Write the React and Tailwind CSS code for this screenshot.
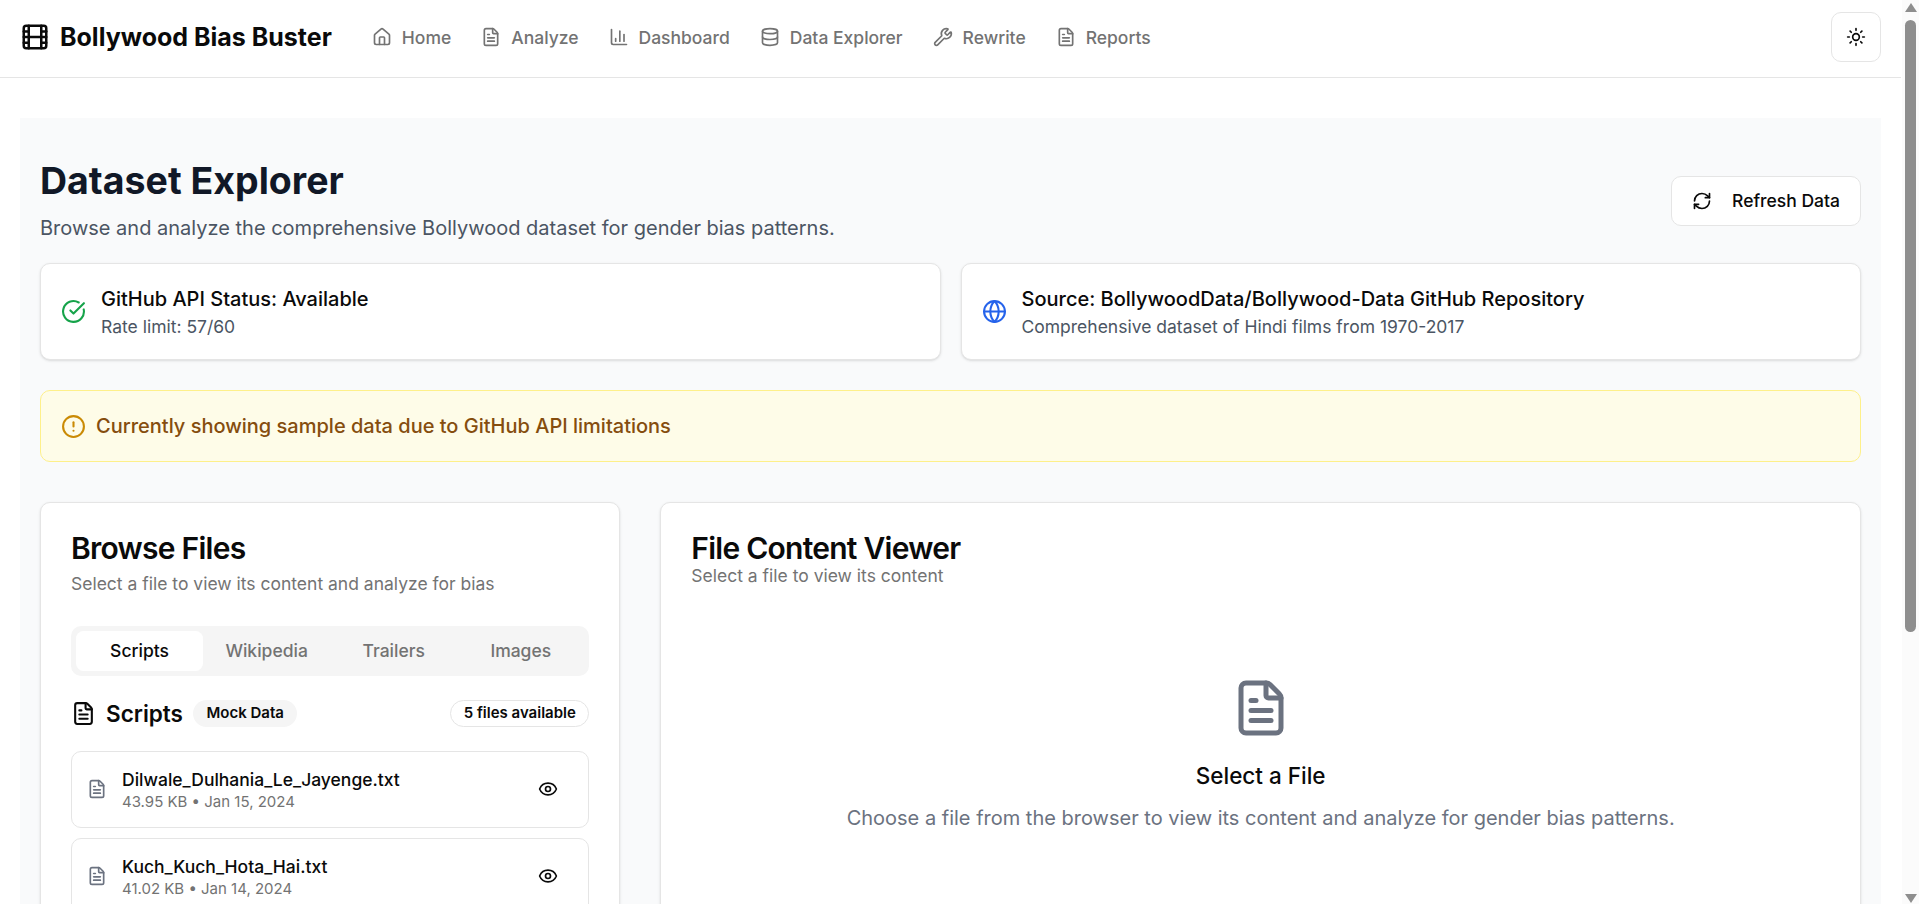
import { House, FileText, ChartColumn, Database, Wrench, Film, Sun, RefreshCw, CircleCheckBig, Globe, CircleAlert, Eye } from "lucide-react";

const nav = [
  [House, "Home"],
  [FileText, "Analyze"],
  [ChartColumn, "Dashboard"],
  [Database, "Data Explorer"],
  [Wrench, "Rewrite"],
  [FileText, "Reports"],
];

const files = [
  ["Dilwale_Dulhania_Le_Jayenge.txt", "43.95 KB • Jan 15, 2024"],
  ["Kuch_Kuch_Hota_Hai.txt", "41.02 KB • Jan 14, 2024"],
  ["Kabhi_Khushi_Kabhie_Gham.txt", "52.73 KB • Jan 13, 2024"],
  ["Dangal.txt", "38.61 KB • Jan 12, 2024"],
  ["Queen.txt", "35.18 KB • Jan 11, 2024"],
];

function InfoCard({ icon: Icon, iconClass, title, sub }) {
  return (
    <div className="flex items-center gap-[15px] rounded-[10px] border border-[#e5e5e5] bg-white p-5 shadow-sm">
      <Icon className={`w-[25px] h-[25px] shrink-0 ${iconClass}`} />
      <div>
        <div className="text-[20px] leading-[30px] font-medium text-[#0a0a0a]">{title}</div>
        <div className="text-[17.5px] leading-[25px] text-[#4b5563]">{sub}</div>
      </div>
    </div>
  );
}

export default function App() {
  return (
    <div className="min-h-screen bg-white pr-[18px] text-[#0a0a0a] font-['Inter',sans-serif]">
      <header className="flex items-center h-[78px] border-b border-[#e5e5e5] px-5 pb-[3px]">
        <div className="flex items-center gap-[10px]">
          <Film className="w-[30px] h-[30px] text-[#0a0a0a]" />
          <span className="text-[25px] leading-[35px] font-bold">Bollywood Bias Buster</span>
        </div>
        <nav className="flex items-center gap-[30px] ml-10">
          {nav.map(([Icon, label]) => (
            <a key={label} className="flex items-center gap-[10px] text-[17.5px] leading-[25px] font-medium text-[#737373]">
              <Icon className="w-5 h-5" />
              {label}
            </a>
          ))}
        </nav>
        <button className="ml-auto flex items-center justify-center w-[50px] h-[50px] rounded-[10px] border border-[#e5e5e5] bg-white">
          <Sun className="w-5 h-5 text-[#0a0a0a]" />
        </button>
      </header>

      <div className="p-5 pt-10">
        <main className="bg-[#f9fafb] p-5 pt-10 pb-10">
          <div className="flex items-center justify-between">
            <div>
              <h1 className="text-[37.5px] leading-[45px] font-bold text-[#111827]">Dataset Explorer</h1>
              <p className="mt-[10px] text-[20px] leading-[30px] text-[#4b5563]">Browse and analyze the comprehensive Bollywood dataset for gender bias patterns.</p>
            </div>
            <button className="flex items-center gap-[20px] h-[50px] px-[20px] pt-px rounded-[10px] border border-[#e5e5e5] bg-white text-[17.5px] font-medium">
              <RefreshCw className="w-5 h-5" />
              Refresh Data
            </button>
          </div>

          <div className="grid grid-cols-2 gap-5 mt-5">
            <InfoCard icon={CircleCheckBig} iconClass="text-[#16a34a]" title="GitHub API Status: Available" sub="Rate limit: 57/60" />
            <InfoCard icon={Globe} iconClass="text-[#2563eb]" title="Source: BollywoodData/Bollywood-Data GitHub Repository" sub="Comprehensive dataset of Hindi films from 1970-2017" />
          </div>

          <div className="flex items-center gap-[10px] mt-[30px] rounded-[10px] border border-[#fef08a] bg-[#fefce8] p-5">
            <CircleAlert className="w-[25px] h-[25px] text-[#ca8a04]" />
            <span className="text-[20px] leading-[30px] font-medium text-[#854d0e]">Currently showing sample data due to GitHub API limitations</span>
          </div>

          <div className="grid grid-cols-3 gap-10 mt-10 items-start">
            <section className="rounded-[10px] border border-[#e5e5e5] bg-white p-[30px] shadow-sm">
              <h2 className="text-[30px] leading-[30px] font-semibold tracking-[-0.75px]">Browse Files</h2>
              <p className="mt-[7.5px] text-[17.5px] leading-[25px] text-[#737373]">Select a file to view its content and analyze for bias</p>
              <div className="grid grid-cols-4 mt-[30px] h-[50px] p-[5px] rounded-[10px] bg-[#f5f5f5]">
                {["Scripts", "Wikipedia", "Trailers", "Images"].map((t, i) => (
                  <div key={t} className={`flex items-center justify-center pt-px rounded-[7.5px] text-[17.5px] font-medium ${i === 0 ? "bg-white text-[#0a0a0a]" : "text-[#737373]"}`}>{t}</div>
                ))}
              </div>
              <div className="flex items-center justify-between mt-5 h-[35px]">
                <div className="flex items-center gap-[10px]">
                  <FileText className="w-[25px] h-[25px]" />
                  <span className="text-[22.5px] leading-[35px] font-semibold">Scripts</span>
                  <span className="flex items-center rounded-full border border-transparent bg-[#f5f5f5] px-[12.5px] py-[2.5px] text-[15px] leading-[20px] font-semibold">Mock Data</span>
                </div>
                <span className="flex items-center rounded-full border border-[#e5e5e5] px-[12.5px] py-[2.5px] text-[15px] leading-[20px] font-semibold">5 files available</span>
              </div>
              <div className="flex flex-col gap-[10px] mt-5">
                {files.map(([name, meta]) => (
                  <div key={name} className="flex items-center gap-[15px] rounded-[10px] border border-[#e5e5e5] py-[15px] pl-[15px] pr-[30px]">
                    <FileText className="w-5 h-5 text-[#6b7280] shrink-0" />
                    <div className="flex-1 min-w-0">
                      <div className="text-[17.5px] leading-[25px] font-medium">{name}</div>
                      <div className="text-[15px] leading-[20px] text-[#737373]">{meta}</div>
                    </div>
                    <Eye className="w-5 h-5 shrink-0" />
                  </div>
                ))}
              </div>
            </section>

            <section className="col-span-2 self-stretch rounded-[10px] border border-[#e5e5e5] bg-white p-[30px] shadow-sm">
              <h2 className="text-[30px] leading-[30px] font-semibold tracking-[-0.75px]">File Content Viewer</h2>
              <p className="text-[17.5px] leading-[25px] text-[#737373]">Select a file to view its content</p>
              <div className="flex flex-col items-center mt-[90px]">
                <FileText className="w-[60px] h-[60px] text-[#6b7280]" />
                <h3 className="mt-5 text-[22.5px] leading-[35px] font-medium">Select a File</h3>
                <p className="mt-[10px] text-[20px] leading-[30px] text-[#6b7280]">Choose a file from the browser to view its content and analyze for gender bias patterns.</p>
              </div>
            </section>
          </div>
        </main>
      </div>

      <div aria-hidden="true" className="fixed right-0 top-0 flex h-screen w-[17px] flex-col items-center justify-between bg-[#fbfbfb] pt-[3px] pb-[1px]">
        <div className="h-0 w-0 border-x-[6.5px] border-b-[9px] border-x-transparent border-b-[#8e8e8e]" />
        <div className="absolute left-[3px] top-[20px] h-[612px] w-[11px] rounded-full bg-[#8e8e8e]" />
        <div className="h-0 w-0 border-x-[6.5px] border-t-[9px] border-x-transparent border-t-[#8e8e8e]" />
      </div>
    </div>
  );
}
